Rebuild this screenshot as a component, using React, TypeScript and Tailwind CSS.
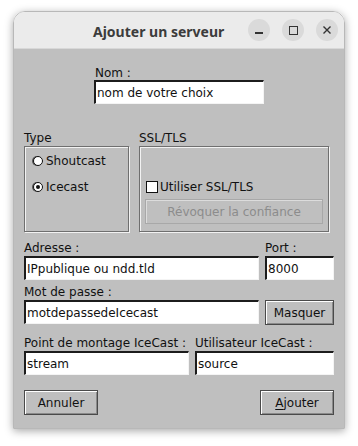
import React from 'react';

const font = { fontFamily: '"DejaVu Sans", "Liberation Sans", sans-serif' };

const Field = ({ value, className = '' }: { value: string; className?: string }) => (
  <div
    className={`h-[24px] bg-white border-t-[2px] border-l-[2px] border-b border-r border-t-[#1c1c1c] border-l-[#1c1c1c] border-b-[#f4f4f4] border-r-[#f4f4f4] flex items-center pl-[1px] text-[12px] text-[#111] leading-none whitespace-nowrap ${className}`}
  >
    {value}
  </div>
);

const TkButton = ({ children, className = '', disabled = false }: { children: React.ReactNode; className?: string; disabled?: boolean }) => (
  <div
    className={`h-[25px] flex items-center justify-center border text-[12px] leading-none whitespace-nowrap ${
      disabled
        ? 'border-[#a8a8a8] text-[#8c8c8c] shadow-[inset_1px_1px_0_#dcdcdc]'
        : 'border-[#4a4a4a] text-[#111] shadow-[inset_1px_1px_0_#ffffff,inset_-1px_-1px_0_#8a8a8a]'
    } ${className}`}
  >
    {children}
  </div>
);

const Radio = ({ checked }: { checked: boolean }) => (
  <span className="relative w-[10px] h-[10px] rounded-full bg-white border border-[#111] flex items-center justify-center shadow-[-1px_0_0_#555]">
    {checked && <span className="w-[4px] h-[4px] rounded-full bg-[#111]" />}
  </span>
);

const Label = ({ children }: { children: React.ReactNode }) => (
  <div className="h-[14px] leading-none whitespace-nowrap">{children}</div>
);

export default function App() {
  return (
    <div className="w-[358px] h-[446px] bg-white overflow-hidden" style={font}>
      <div className="ml-[13px] mt-[11px] w-[332px] h-[418px] rounded-t-[12px] overflow-hidden flex flex-col shadow-[0_2px_8px_rgba(0,0,0,0.35)] border border-[#b8b8b8]">
        {/* Title bar */}
        <div className="h-[37px] bg-[#ebebeb] flex items-center relative border-b border-[#d8d8d8]">
          <div
            className="absolute left-[79px] top-[9px] text-[14px] font-bold text-[#3c3c3c]"
            style={{ fontFamily: '"Noto Sans", "Open Sans", sans-serif' }}
          >
            Ajouter un serveur
          </div>
          <div className="ml-auto mr-[6px] flex gap-[12px]">
            <div className="w-[22px] h-[22px] rounded-full bg-[#dadada] flex items-center justify-center">
              <span className="w-[8px] h-[1.5px] bg-[#333] mt-[6px]" />
            </div>
            <div className="w-[22px] h-[22px] rounded-full bg-[#dadada] flex items-center justify-center">
              <span className="w-[9px] h-[9px] border-[1.5px] border-[#333]" />
            </div>
            <div className="w-[22px] h-[22px] rounded-full bg-[#dadada] flex items-center justify-center">
              <svg width="10" height="10" viewBox="0 0 10 10">
                <path d="M1.5 1.5 L8.5 8.5 M8.5 1.5 L1.5 8.5" stroke="#333" strokeWidth="1.4" />
              </svg>
            </div>
          </div>
        </div>

        {/* Body */}
        <div className="flex-1 bg-[#bfbfbf] px-[10px] pt-[15px] text-[12px] text-[#111]">
          {/* Nom */}
          <div className="ml-[70px] w-[170px]">
            <div className="h-[16px] pl-[1px] pt-[3px] leading-none">Nom :</div>
            <Field value="nom de votre choix" />
          </div>

          {/* Type + SSL */}
          <div className="mt-[26px] flex gap-[10px]">
            <div className="w-[105px]">
              <div className="h-[16px] pt-[2px] leading-none">Type</div>
              <div className="h-[86px] border border-[#6f6f6f] shadow-[inset_1px_1px_0_#f2f2f2,1px_1px_0_#f2f2f2] pl-[8px] pt-[6px] flex flex-col gap-[10px]">
                <div className="h-[16px] flex items-center gap-[3px]">
                  <Radio checked={false} />
                  <span>Shoutcast</span>
                </div>
                <div className="h-[16px] flex items-center gap-[3px]">
                  <Radio checked />
                  <span>Icecast</span>
                </div>
              </div>
            </div>
            <div className="w-[190px]">
              <div className="h-[16px] pt-[2px] leading-none">SSL/TLS</div>
              <div className="h-[86px] border border-[#6f6f6f] shadow-[inset_1px_1px_0_#f2f2f2,1px_1px_0_#f2f2f2] px-[5px] pt-[32px] flex flex-col">
                <div className="h-[16px] flex items-center gap-[2px] pl-[1px]">
                  <span className="w-[12px] h-[12px] bg-white border border-[#111]" />
                  <span>Utiliser SSL/TLS</span>
                </div>
                <TkButton disabled className="mt-[4px] h-[24px]">
                  Révoquer la confiance
                </TkButton>
              </div>
            </div>
          </div>

          {/* Adresse / Port */}
          <div className="mt-[10px] flex gap-[6px]">
            <div className="w-[235px]">
              <Label>Adresse :</Label>
              <Field value="IPpublique ou ndd.tld" />
            </div>
            <div className="w-[69px]">
              <Label>Port :</Label>
              <Field value="8000" />
            </div>
          </div>

          {/* Mot de passe */}
          <div className="mt-[6px]">
            <Label>Mot de passe :</Label>
            <div className="flex gap-[6px]">
              <Field value="motdepassedeIcecast" className="w-[235px]" />
              <TkButton className="w-[69px] h-[24px]">Masquer</TkButton>
            </div>
          </div>

          {/* Point de montage / Utilisateur */}
          <div className="mt-[12px] flex gap-[6px]">
            <div className="w-[165px]">
              <Label>Point de montage IceCast :</Label>
              <Field value="stream" />
            </div>
            <div className="w-[139px]">
              <Label>Utilisateur IceCast :</Label>
              <Field value="source" />
            </div>
          </div>

          {/* Buttons */}
          <div className="mt-[15px] flex justify-between">
            <TkButton className="w-[74px]">Annuler</TkButton>
            <TkButton className="w-[74px]">
              <span>
                <span className="underline underline-offset-2">A</span>jouter
              </span>
            </TkButton>
          </div>
        </div>
      </div>
    </div>
  );
}
